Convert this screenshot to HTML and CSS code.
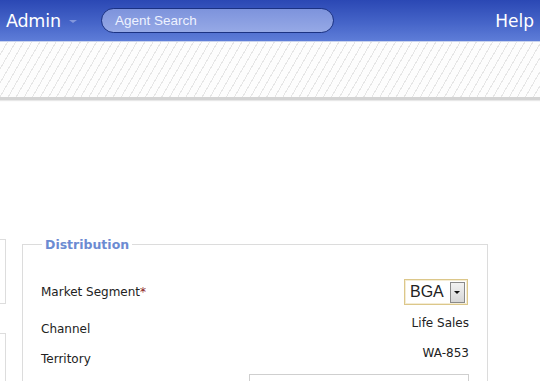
FILE: index.html
```html
<!DOCTYPE html>
<html lang="en">
<head>
    <meta charset="UTF-8">
    <title>Agent Admin</title>
    <link rel="stylesheet" href="styles.css">
</head>
<body>
    <header class="topbar">
        <div class="brand">
            <span class="brand-name">Admin</span>
            <span class="caret"></span>
        </div>
        <div class="search">Agent Search</div>
        <a class="help" href="#">Help</a>
    </header>
    <div class="hatch"></div>

    <main class="page">
        <div class="side">
            <div class="side-box first"></div>
            <div class="side-box second"></div>
        </div>

        <fieldset class="distribution">
            <legend>Distribution</legend>
            <div class="row row-main">
                <span class="label">Market Segment<span class="req">*</span></span>
                <div class="select">
                    <span class="select-value">BGA</span>
                    <span class="select-btn"><span class="arrow"></span></span>
                </div>
            </div>
            <div class="row">
                <span class="label">Channel</span>
                <span class="value">Life Sales</span>
            </div>
            <div class="row">
                <span class="label">Territory</span>
                <span class="value">WA-853</span>
            </div>
            <div class="row row-input">
                <div class="text-box"></div>
            </div>
        </fieldset>
    </main>
</body>
</html>
```

FILE: styles.css
```css
body {
    margin: 0;
    font-family: "DejaVu Sans", Verdana, sans-serif;
    background: #fff;
    color: #222;
    overflow: hidden;
    height: 381px;
}

.topbar {
    height: 41px;
    background: linear-gradient(to bottom, #2b48b4, #4564c8 55%, #5e7dd8);
    border-bottom: 1px solid #c9d3ee;
    display: flex;
    align-items: center;
    color: #fff;
}

.brand {
    display: flex;
    align-items: center;
    margin-left: 6px;
    width: 95px;
}

.brand-name {
    font-size: 17.5px;
    letter-spacing: -0.2px;
}

.caret {
    width: 0;
    height: 0;
    border-left: 4px solid transparent;
    border-right: 4px solid transparent;
    border-top: 3px solid #8397dc;
    margin-left: 8px;
    margin-top: 2px;
}

.search {
    width: 218px;
    height: 23px;
    border: 1px solid #1b3282;
    border-radius: 13px;
    background: linear-gradient(to bottom, #7d93dc, #96a9e6);
    font-family: "Liberation Sans", Arial, sans-serif;
    font-size: 13.5px;
    line-height: 23px;
    padding-left: 13px;
    color: #eef2ff;
}

.help {
    margin-left: auto;
    margin-right: 6px;
    color: #fff;
    text-decoration: none;
    font-size: 17px;
}

.hatch {
    height: 55px;
    background: repeating-linear-gradient(120deg, #fdfdfd 0, #fdfdfd 6px, #e6e6e6 6px, #e6e6e6 7px);
    border-bottom: 3px solid #d4d4d4;
    box-shadow: 0 1px 1px #e8e8e8;
}

.page {
    display: flex;
    padding-top: 137px;
}

.side {
    width: 6px;
    margin-right: 16px;
}

.side-box {
    border: 1px solid #ddd;
    border-left: none;
    width: 5px;
}

.side-box.first {
    height: 63px;
    margin-top: 2px;
}

.side-box.second {
    height: 60px;
    margin-top: 29px;
}

.distribution {
    width: 428px;
    margin: 0;
    border: 1px solid #dcdcdc;
    padding: 27px 18px 0 18px;
    height: 160px;
}

.distribution legend {
    color: #6c8bd2;
    font-weight: bold;
    font-size: 12.5px;
    padding: 0 3px;
    margin-left: 1px;
}

.row {
    display: flex;
    justify-content: space-between;
    align-items: flex-start;
    font-size: 12px;
}

.row-main {
    align-items: center;
    margin-bottom: 11px;
}

.row .label {
    padding-top: 6px;
}

.row-main .label {
    padding-top: 0;
}

.req {
    color: #8b1a1a;
}

.row .value {
    height: 30px;
}

.select {
    display: flex;
    align-items: center;
    width: 57px;
    height: 24px;
    border: 1px solid #dcc78a;
    box-shadow: inset 0 0 0 1px #f4ecd4;
    padding-left: 5px;
    margin-right: 1px;
    background: #fff;
}

.select-value {
    font-family: "Liberation Sans", Arial, sans-serif;
    font-size: 16px;
    color: #222;
}

.select-btn {
    margin-left: 6px;
    width: 13px;
    height: 19px;
    border: 1px solid #8a8a8a;
    background: linear-gradient(to bottom, #f2f2f2, #d6d6d6);
    display: flex;
    align-items: center;
    justify-content: center;
}

.arrow {
    width: 0;
    height: 0;
    border-left: 3px solid transparent;
    border-right: 3px solid transparent;
    border-top: 3px solid #111;
}

.row-input {
    justify-content: flex-end;
    margin-top: -2px;
}

.text-box {
    width: 218px;
    height: 24px;
    border: 1px solid #cfcfcf;
}
```
